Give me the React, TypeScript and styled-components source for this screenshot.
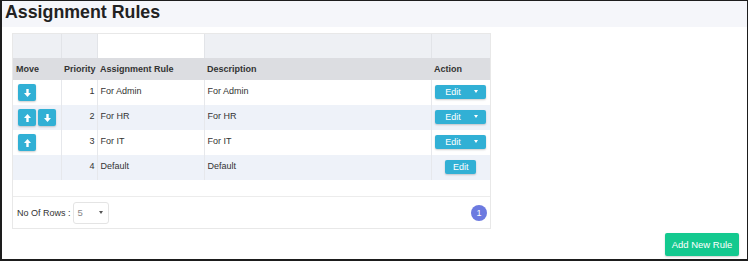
import styled, { createGlobalStyle } from "styled-components";

const GlobalStyle = createGlobalStyle`
  html, body {
    margin: 0;
    padding: 0;
    background: #ffffff;
    font-family: "Liberation Sans", Arial, sans-serif;
  }
`;

type Rule = {
  priority: number;
  name: string;
  description: string;
  up: boolean;
  down: boolean;
  isDefault?: boolean;
};

const rules: Rule[] = [
  { priority: 1, name: "For Admin", description: "For Admin", up: false, down: true },
  { priority: 2, name: "For HR", description: "For HR", up: true, down: true },
  { priority: 3, name: "For IT", description: "For IT", up: true, down: false },
  { priority: 4, name: "Default", description: "Default", up: false, down: false, isDefault: true },
];

const Arrow = ({ dir }: { dir: "up" | "down" }) => (
  <svg width="7" height="8" viewBox="0 0 7 8">
    {dir === "down" ? (
      <path d="M2.3 0h2.4v4H7L3.5 8 0 4h2.3z" fill="#fff" />
    ) : (
      <path d="M2.3 8h2.4V4H7L3.5 0 0 4h2.3z" fill="#fff" />
    )}
  </svg>
);

const App = () => {
  return (
    <>
      <GlobalStyle />
      <Frame>
        <Header>
          <Title>Assignment Rules</Title>
        </Header>
        <Content>
          <Panel>
            <Table>
              <colgroup>
                <col style={{ width: 48 }} />
                <col style={{ width: 36 }} />
                <col style={{ width: 107 }} />
                <col style={{ width: 227 }} />
                <col style={{ width: 59 }} />
              </colgroup>
              <thead>
                <FilterRow>
                  <FilterCell />
                  <FilterCell />
                  <FilterCell $white />
                  <FilterCell />
                  <FilterCell />
                </FilterRow>
                <HeadRow>
                  <Th>Move</Th>
                  <Th>Priority</Th>
                  <Th>Assignment Rule</Th>
                  <Th>Description</Th>
                  <Th>Action</Th>
                </HeadRow>
              </thead>
              <tbody>
                {rules.map((r, i) => (
                  <Row key={r.priority} $striped={i % 2 === 1}>
                    <Td>
                      <MoveGroup>
                        {r.up && (
                          <MoveButton>
                            <Arrow dir="up" />
                          </MoveButton>
                        )}
                        {r.down && (
                          <MoveButton>
                            <Arrow dir="down" />
                          </MoveButton>
                        )}
                      </MoveGroup>
                    </Td>
                    <Td $right>{r.priority}</Td>
                    <Td>{r.name}</Td>
                    <Td>{r.description}</Td>
                    <Td $center>
                      {r.isDefault ? (
                        <EditButton $single>Edit</EditButton>
                      ) : (
                        <EditButton>
                          <span>Edit</span>
                          <Caret />
                        </EditButton>
                      )}
                    </Td>
                  </Row>
                ))}
              </tbody>
            </Table>
            <Spacer />
            <Footer>
              <RowsPicker>
                <span>No Of Rows :</span>
                <Select>
                  <span>5</span>
                  <Caret $dark />
                </Select>
              </RowsPicker>
              <PageDot>1</PageDot>
            </Footer>
          </Panel>
          <Actions>
            <AddButton>Add New Rule</AddButton>
          </Actions>
        </Content>
      </Frame>
    </>
  );
};

export default App;

const Frame = styled.div`
  box-sizing: border-box;
  width: 748px;
  height: 261px;
  border: 1px solid #1d1d1d;
  border-left-width: 2px;
  border-bottom-width: 2px;
  overflow: hidden;
  background: #ffffff;
`;

const Header = styled.div`
  height: 26px;
  background: #f5f6fa;
  padding: 0 0 0 3px;
  display: flex;
  align-items: center;
`;

const Title = styled.h1`
  margin: 0;
  font-size: 17.8px;
  font-weight: bold;
  color: #222;
  line-height: 22px;
  margin-top: -4px;
`;

const Content = styled.div`
  padding: 6px 8px 0 10px;
  display: flex;
  flex-direction: column;
`;

const Panel = styled.div`
  width: 479px;
  box-sizing: border-box;
  border: 1px solid #e8e8e8;
  background: #fff;
`;

const Table = styled.table`
  width: 477px;
  border-collapse: collapse;
  table-layout: fixed;
  font-size: 9px;
  color: #333;
`;

const FilterRow = styled.tr`
  height: 24px;
`;

const FilterCell = styled.td<{ $white?: boolean }>`
  background: ${({ $white }) => ($white ? "#ffffff" : "#eef0f4")};
  border-right: 1px solid #e2e4e8;
  padding: 0;
  &:last-child {
    border-right: none;
  }
`;

const HeadRow = styled.tr`
  height: 22px;
  background: #dcdde1;
`;

const Th = styled.th`
  text-align: left;
  font-weight: bold;
  font-size: 9px;
  color: #333;
  padding: 0 3px;
`;

const Row = styled.tr<{ $striped: boolean }>`
  height: 25px;
  background: ${({ $striped }) => ($striped ? "#eef2f9" : "#ffffff")};
`;

const Td = styled.td<{ $right?: boolean; $center?: boolean }>`
  padding: 0 3px;
  border-right: 1px solid #e6e8ec;
  text-align: ${({ $right, $center }) => ($right ? "right" : $center ? "center" : "left")};
  vertical-align: middle;
  &:nth-child(3),
  &:nth-child(4) {
    vertical-align: top;
    padding-top: 6px;
  }
  &:nth-child(2) {
    vertical-align: top;
    padding-top: 6px;
    padding-right: 2px;
  }
  &:last-child {
    border-right: none;
  }
`;

const MoveGroup = styled.div`
  display: flex;
  gap: 2px;
  padding-left: 2px;
`;

const MoveButton = styled.button`
  width: 18px;
  height: 17px;
  border: none;
  border-radius: 2px;
  background: #31b0d5;
  box-shadow: 0 1px 2px rgba(0, 0, 0, 0.2);
  display: flex;
  align-items: center;
  justify-content: center;
  padding: 0;
`;

const EditButton = styled.button<{ $single?: boolean }>`
  width: ${({ $single }) => ($single ? "31px" : "51px")};
  height: 14px;
  border: none;
  border-radius: 2px;
  background: #31b0d5;
  box-shadow: 0 1px 2px rgba(0, 0, 0, 0.2);
  color: #fff;
  font-family: "Liberation Sans", Arial, sans-serif;
  font-size: 9px;
  display: inline-flex;
  align-items: center;
  justify-content: ${({ $single }) => ($single ? "center" : "space-between")};
  padding: 0 8px 0 10px;
  box-sizing: border-box;
  vertical-align: middle;
  margin-top: -2px;
  ${({ $single }) => ($single ? "padding: 0;" : "")}
`;

const Caret = styled.span<{ $dark?: boolean }>`
  width: 0;
  height: 0;
  border-left: 2.5px solid transparent;
  border-right: 2.5px solid transparent;
  border-top: 3px solid ${({ $dark }) => ($dark ? "#555" : "#fff")};
`;

const Spacer = styled.div`
  height: 16px;
  border-bottom: 1px solid #ececec;
`;

const Footer = styled.div`
  height: 31px;
  display: flex;
  align-items: center;
  justify-content: space-between;
  padding: 0 3px 0 4px;
`;

const RowsPicker = styled.div`
  display: flex;
  align-items: center;
  gap: 2px;
  font-size: 9px;
  color: #333;
`;

const Select = styled.div`
  width: 36px;
  height: 22px;
  box-sizing: border-box;
  border: 1px solid #e4e4e4;
  border-radius: 3px;
  display: flex;
  align-items: center;
  justify-content: space-between;
  padding: 0 5px 0 4px;
  color: #888;
  font-size: 9.5px;
`;

const PageDot = styled.div`
  width: 16px;
  height: 16px;
  border-radius: 50%;
  background: #6c7ae0;
  color: #fff;
  font-size: 9px;
  display: flex;
  align-items: center;
  justify-content: center;
`;

const Actions = styled.div`
  display: flex;
  justify-content: flex-end;
  margin-top: 4px;
`;

const AddButton = styled.button`
  width: 74px;
  height: 23px;
  border: none;
  border-radius: 2px;
  background: #13c98f;
  box-shadow: 0 1px 2px rgba(0, 0, 0, 0.2);
  color: #fff;
  font-family: "Liberation Sans", Arial, sans-serif;
  font-size: 9.5px;
  padding: 0;
`;
